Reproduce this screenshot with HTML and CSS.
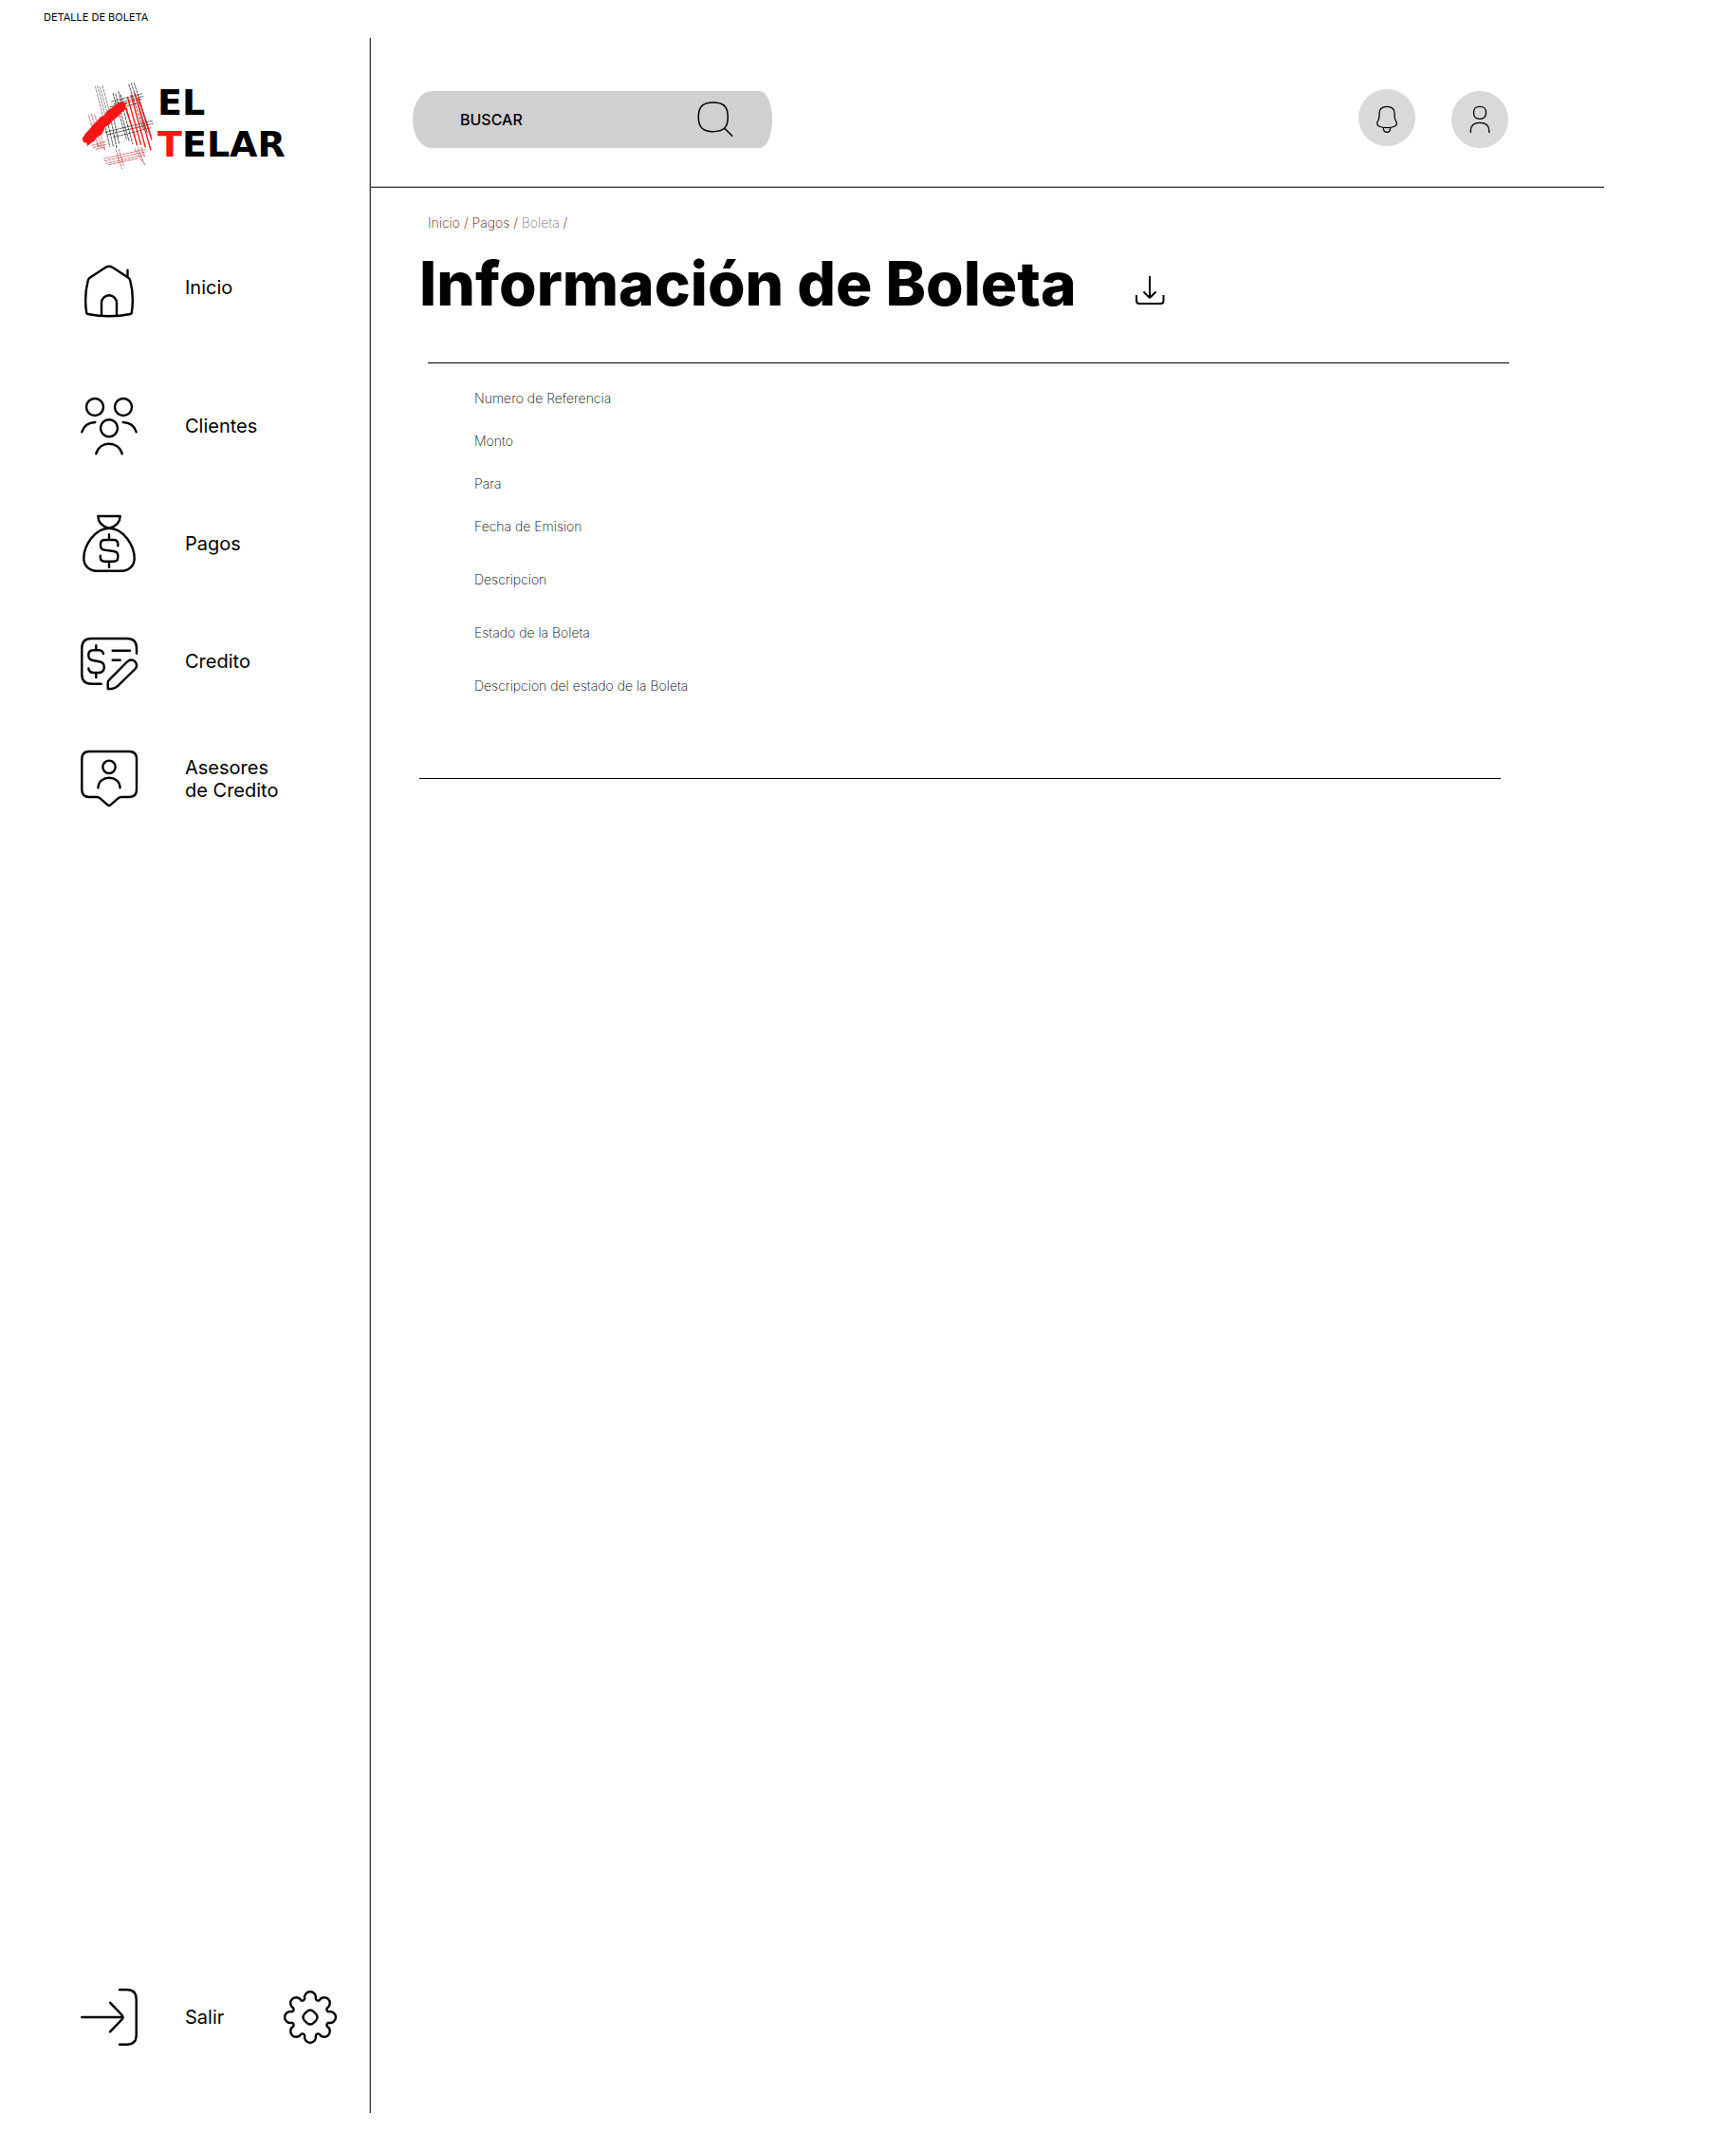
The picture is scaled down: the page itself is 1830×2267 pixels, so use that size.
FILE: index.html
```html
<!DOCTYPE html>
<html lang="es">
<head>
<meta charset="utf-8">
<meta name="viewport" content="width=device-width, initial-scale=1">
<title>Detalle de boleta</title>
<link rel="stylesheet" href="styles.css">
</head>
<body>
<p class="page-name">DETALLE DE BOLETA</p>
<div class="shell">
  <aside class="sidebar">
    <a class="brand" href="#">
      <svg class="brand-mark" viewBox="0 0 270 318" aria-hidden="true">
        <g class="thread thread-grey">
          <path d="M61 38L86 134M68 36L93 132M76 40L101 130M84 36L107 124"/>
        </g>
        <g class="thread thread-black">
          <path d="M86 134L107 230M97 138L118 228M108 130L129 234M117 128L137 222"/>
          <path d="M117 60L160 206M125 62L169 214M134 54L180 222M141 64L188 200"/>
          <path d="M167 32L214 176M175 28L226 186M184 28L238 196"/>
          <path d="M112 88L210 62M118 96L214 70M108 104L208 79M114 112L204 90"/>
          <path d="M92 184L242 148M98 192L244 157M118 200L238 170"/>
        </g>
        <g class="thread thread-red">
          <path d="M40 130L72 232M49 126L80 228M59 128L92 240"/>
          <path d="M50 226L94 214M54 233L96 222M62 238L92 231M66 222L90 238"/>
          <path d="M88 268L220 238M90 275L222 246M94 283L218 255M104 287L200 266"/>
          <path d="M126 238L146 300M136 238L152 290M186 236L212 280M196 234L218 288M206 232L218 262"/>
        </g>
        <path class="thread-bold" d="M158 104L194 226M163 72L206 224M174 66L220 232M186 60L237 241M197 76L240 208"/>
        <path class="brush" d="M152 90L143 87L134 93L122 99L112 108L98 118L90 130L76 137L66 150L52 163L42 176L30 188L20 204L24 216L34 218L36 228L46 220L58 212L66 200L80 192L88 180L92 168L106 160L118 146L134 134L142 124L158 110L154 102L162 92Z"/>
      </svg>
      <span class="brand-name"><span>EL</span><span><span class="brand-accent">T</span>ELAR</span></span>
    </a>
    <nav class="menu" aria-label="Principal">
      <a class="menu-item menu-home" href="#">
        <svg class="icon" viewBox="0 0 64 64" aria-hidden="true"><path d="M32 9.700Q34 9.700 36 11L52 21.500Q53.700 22.500 54.200 24.500Q58.500 41 55.800 58.500Q55.600 59.800 54.400 60Q32 64.500 9.600 60Q8.400 59.800 8.200 58.500Q5.500 41 9.800 24.500Q10.300 22.500 12 21.500L28 11Q30 9.700 32 9.700Z"/><path d="M51.500 13.800V20.500M24 61V48.300a8 8 0 0 1 16 0V61"/></svg>
        <span>Inicio</span>
      </a>
      <a class="menu-item" href="#">
        <svg class="icon" viewBox="0 0 64 64" aria-hidden="true"><circle cx="17" cy="12" r="9"/><circle cx="47" cy="12" r="9"/><circle cx="32" cy="34.300" r="9"/><path d="M3.300 38.300Q6.500 28.500 17.300 28M60.700 38.300Q57.500 28.500 46.700 28M18.300 61.300C21.500 47.200 42.500 47.200 45.700 61.300"/></svg>
        <span>Clientes</span>
      </a>
      <a class="menu-item" href="#">
        <svg class="icon" viewBox="0 0 64 64" aria-hidden="true"><path d="M20.300 3H43.700Q43.500 12.500 32 15.700Q20.500 12.500 20.300 3ZM32 15.700C47 15.700 58.700 34 58.700 47.500C58.700 55 53 60.700 45.500 60.700H18.500C11 60.700 5.300 55 5.300 47.500C5.300 34 17 15.700 32 15.700Z"/><path d="M32 22.300V28M32 50.700V56.700M41.300 34.300V32.500Q41.300 28 36.800 28H27.500Q23 28 23 32.500V34Q23 38 27 38.600L37 40Q41.300 40.700 41.300 44.500V46.200Q41.300 50.700 36.800 50.700H27.300Q22.800 50.700 22.800 46.200V44.700"/></svg>
        <span>Pagos</span>
      </a>
      <a class="menu-item" href="#">
        <svg class="icon" viewBox="0 0 64 64" aria-hidden="true"><path d="M61 23.700V18Q61 8 51 8H13.300Q3.300 8 3.300 18V45.700Q3.300 55.700 13.300 55.700H23.700"/><path d="M18.300 15.300V20.300M18.300 44V49M26 24Q25 20.300 21.300 20.300H15.500Q10.300 20.300 10.300 25.500Q10.300 30.300 15 31L21.500 32.200Q26.800 33 26.800 38Q26.800 44 20.800 44H16Q11 44 10.300 39.500M35.700 20.700H54M35.700 30.700H43.700"/><path d="M30.700 61V55Q30.700 53 32 51.700L51 32.500Q54.500 29.200 58.500 31.500Q62.800 35 60 39.500L41 58.200Q38 61 34.500 61Z"/></svg>
        <span>Credito</span>
      </a>
      <a class="menu-item" href="#">
        <svg class="icon" viewBox="0 0 64 64" aria-hidden="true"><path d="M11 3H53.300Q61 3 61 10.700V43.300Q61 51 53.300 51H45Q43 51 41.500 52.300L33.500 59.300Q32 60.500 30.500 59.300L22.500 52.300Q21 51 19 51H11Q3.300 51 3.300 43.300V10.700Q3.300 3 11 3Z"/><circle cx="32" cy="19.300" r="6.700"/><path d="M20.500 41.300C20.500 27.200 43.500 27.200 43.500 41.300"/></svg>
        <span>Asesores<br>de Credito</span>
      </a>
    </nav>
    <div class="sidebar-foot">
      <a class="menu-item" href="#">
        <svg class="icon" viewBox="0 0 64 64" aria-hidden="true"><path d="M3.300 32H46M33 16.700L45.500 29.700Q47.500 32 45.500 34.300L33 47.300M43 3H50.700Q60.700 3 60.700 13V50.700Q60.700 60.700 50.700 60.700H43"/></svg>
        <span>Salir</span>
      </a>
      <button class="plain-button" type="button" aria-label="Configuración">
        <svg class="icon" viewBox="0 0 64 64" aria-hidden="true"><path d="M26.200 12.600A2.500 2.500 0 0 1 22.400 14.200A6 6 0 1 0 14.200 22.400A2.500 2.500 0 0 1 12.600 26.200A6 6 0 1 0 12.600 37.800A2.500 2.500 0 0 1 14.200 41.600A6 6 0 1 0 22.400 49.800A2.500 2.500 0 0 1 26.200 51.400A6 6 0 1 0 37.800 51.400A2.500 2.500 0 0 1 41.600 49.800A6 6 0 1 0 49.800 41.600A2.500 2.500 0 0 1 51.400 37.800A6 6 0 1 0 51.400 26.200A2.500 2.500 0 0 1 49.800 22.400A6 6 0 1 0 41.600 14.200A2.500 2.500 0 0 1 37.800 12.600A6 6 0 1 0 26.200 12.600Z"/><path d="M32 24.500Q34 24.500 35.500 26L38 28.500Q39.500 30 39.500 32T38 35.500L35.500 38Q34 39.500 32 39.500T28.500 38L26 35.500Q24.500 34 24.500 32T26 28.500L28.500 26Q30 24.500 32 24.500Z"/></svg>
      </button>
    </div>
  </aside>
  <main class="main">
    <header class="topbar">
      <form class="search" role="search">
        <input class="search-input" type="text" aria-label="Buscar" placeholder="BUSCAR">
        <button class="plain-button" type="button" aria-label="Buscar">
          <svg class="search-icon" viewBox="0 0 40 40" aria-hidden="true"><path d="M16.800 2C28 2 32.300 6.500 32.300 17.300S28 32.700 16.800 32.700S1.300 28 1.300 17.300S5.600 2 16.800 2ZM28.300 28.700L37.300 37.700"/></svg>
        </button>
      </form>
      <div class="actions">
        <button class="round-button round-button-raised" type="button" aria-label="Notificaciones">
          <svg class="round-icon" viewBox="0 0 60 60" aria-hidden="true"><path d="M30 18.300C35 18.300 38 21 38 25.500C38 29 38 31 39.200 33C40.500 35 41 37.500 38.500 39C36 40.300 33 40.700 30 40.700S24 40.300 21.500 39C19 37.500 19.500 35 20.800 33C22 31 22 29 22 25.500C22 21 25 18.300 30 18.300ZM26.300 40.700Q26.500 45.300 30 45.300T33.700 40.700"/></svg>
        </button>
        <button class="round-button" type="button" aria-label="Perfil">
          <svg class="round-icon" viewBox="0 0 60 60" aria-hidden="true"><path d="M30 16.300C34.800 16.300 36.500 18 36.500 22.700S34.800 29.300 30 29.300S23.500 27.500 23.500 22.700S25.200 16.300 30 16.300ZM20.300 44V42C20.300 36 24 33.300 30 33.300S39.700 36 39.700 42V44"/></svg>
        </button>
      </div>
    </header>
    <div class="content">
      <nav class="crumbs" aria-label="Ruta"><a href="#">Inicio</a> / <a href="#">Pagos</a> / <span class="crumb-current">Boleta</span> /</nav>
      <div class="heading">
        <h1>Información de Boleta</h1>
        <button class="plain-button" type="button" aria-label="Descargar">
          <svg class="download-icon" viewBox="0 0 32 32" aria-hidden="true"><path d="M16 1V24.500M9.500 17.500L14.800 22.800Q16 24 17.200 22.800L22.500 17.500M2 21V27Q2 30 5 30H27.500Q30.500 30 30.500 27V21"/></svg>
        </button>
      </div>
      <ul class="details">
        <li>Numero de Referencia</li>
        <li>Monto</li>
        <li>Para</li>
        <li>Fecha de Emision</li>
        <li class="detail-wide">Descripcion</li>
        <li class="detail-wide">Estado de la Boleta</li>
        <li class="detail-wide">Descripcion del estado de la Boleta</li>
      </ul>
      <hr class="closing-rule">
    </div>
  </main>
</div>
</body>
</html>
```
FILE: styles.css
```css
* { box-sizing: border-box; }

body {
  margin: 0;
  background: #fff;
  color: #000;
  font-family: Inter, "Liberation Sans", sans-serif;
}

a { color: inherit; text-decoration: none; }

.page-name {
  height: 40px;
  margin: 0;
  padding: 10px 46px;
  font-size: 11px;
  line-height: 16px;
}

.shell {
  display: flex;
  min-height: calc(100vh - 80px);
  margin-bottom: 40px;
}

/* Sidebar */
.sidebar {
  display: flex;
  flex: none;
  flex-direction: column;
  width: 391px;
  padding: 38px 31px 69px 80px;
  border-right: 1px solid #3a3a3a;
  box-shadow: inset -1px 0 #bbb;
}

.brand { display: flex; }

.brand-mark { flex: none; width: 90px; height: 106px; }

.thread { fill: none; stroke-width: 2; stroke-dasharray: 10 2; }
.thread-grey { stroke: #555; }
.thread-black { stroke: #000; }
.thread-red { stroke: #c0262c; }
.thread-bold { fill: none; stroke: #f11; stroke-width: 4; }
.brush { fill: #fd1515; }

.brand-name {
  display: flex;
  flex-direction: column;
  padding-top: 8px;
  margin-left: -4px;
  font-family: "DejaVu Sans", sans-serif;
  font-size: 38px;
  font-weight: 700;
  line-height: 44px;
}

.brand-accent { color: #fd1515; }

.menu {
  display: flex;
  flex-direction: column;
  gap: 60px;
  padding: 87px 0 60px 3px;
}

.menu-home { margin-bottom: 22px; }

.menu-item {
  display: flex;
  align-items: center;
  gap: 48px;
  font-size: 20px;
  line-height: 24px;
}

.icon {
  display: block;
  flex: none;
  width: 64px;
  height: 64px;
  fill: none;
  stroke: #000;
  stroke-width: 2.400;
  stroke-linecap: round;
  stroke-linejoin: round;
}

.sidebar-foot {
  display: flex;
  justify-content: space-between;
  margin-top: auto;
  padding-left: 3px;
}

.plain-button {
  display: block;
  padding: 0;
  border: 0;
  background: none;
  cursor: pointer;
}

/* Top bar */
.main { flex: 1; min-width: 0; margin-right: 139px; }

.topbar {
  display: flex;
  justify-content: space-between;
  align-items: flex-end;
  padding: 54px 101px 41px 44px;
  border-bottom: 1px solid #3a3a3a;
  box-shadow: inset 0 -1px #bbb;
}

.search {
  display: flex;
  align-items: center;
  width: 379px;
  height: 60px;
  padding: 0 39px 0 50px;
  border-radius: 20px 13px 13px 20px / 30px;
  background: #d0d0d0;
}

.search-input {
  flex: 1;
  min-width: 0;
  padding: 0;
  border: 0;
  background: none;
  font: 500 16px/20px Inter, "Liberation Sans", sans-serif;
}

.search-input::placeholder { color: #000; opacity: 1; }

.search-icon {
  display: block;
  width: 40px;
  height: 40px;
  fill: none;
  stroke: #000;
  stroke-width: 1.500;
}

.actions { display: flex; align-items: flex-end; gap: 38px; height: 62px; }

.round-button {
  width: 60px;
  height: 60px;
  padding: 0;
  border: 0;
  border-radius: 50%;
  background: #d9d9d9;
  cursor: pointer;
}

.round-button-raised { align-self: flex-start; }

.round-icon { display: block; fill: none; stroke: #000; stroke-width: 1.300; }

/* Content */
.content { padding: 27px 100px 0 51px; }

.crumbs {
  padding-left: 9px;
  color: #640000;
  font-size: 14px;
  font-weight: 200;
  line-height: 20px;
}

.crumb-current { color: #777; }

.heading { display: flex; align-items: baseline; gap: 61px; margin: 16px 0 45px; }

h1 { margin: 0; font-size: 64px; font-weight: 800; line-height: 76px; }

.download-icon {
  display: block;
  width: 32px;
  height: 32px;
  fill: none;
  stroke: #000;
  stroke-width: 2;
}

.details {
  display: flex;
  flex-direction: column;
  gap: 25px;
  margin: 0 0 0 9px;
  padding: 27px 0 87px 49px;
  border-top: 1px solid #000;
  font-size: 14px;
  font-weight: 200;
  line-height: 20px;
  list-style: none;
}

.detail-wide { margin-top: 11px; }

.closing-rule {
  height: 1px;
  margin: 0 9px 0 0;
  border: 0;
  background: #000;
}
```
